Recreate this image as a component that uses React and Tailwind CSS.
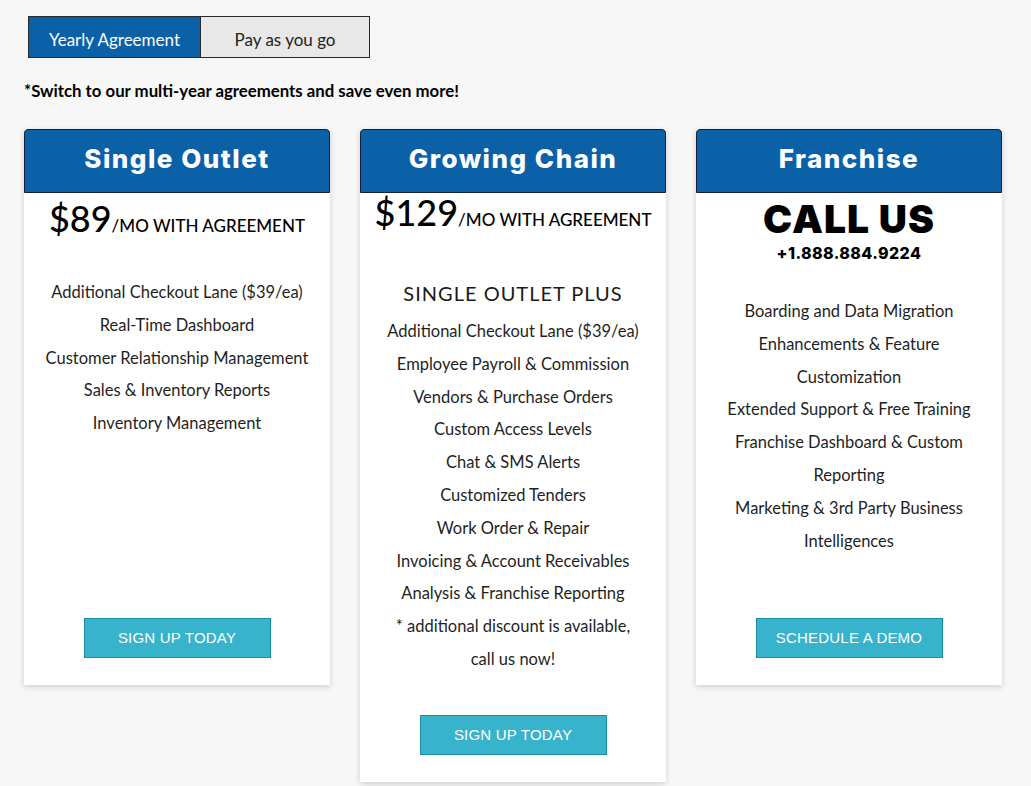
import React from "react";

const lato = { fontFamily: "Lato, 'Open Sans', sans-serif" };
const heading = { fontFamily: "Inter, 'Open Sans', sans-serif" };
const arial = { fontFamily: "'Liberation Sans', Arial, sans-serif" };

function Header({ title }) {
  return (
    <div className="h-[64px] rounded-t-[4px] border-[1.5px] border-[#18222e] bg-[#0b61a8] flex items-center justify-center pb-[4px]">
      <span
        style={heading}
        className="text-white text-[26px] font-extrabold tracking-[1.5px] leading-none"
      >
        {title}
      </span>
    </div>
  );
}

function Features({ items }) {
  return (
    <ul style={lato} className="text-center text-[16.5px] leading-[32.8px] text-[#1f1f1f]">
      {items.map((t, i) => (
        <li key={i}>{t}</li>
      ))}
    </ul>
  );
}

function Button({ children }) {
  return (
    <button
      style={arial}
      className="w-[187px] h-[40px] bg-[#38b3cc] border border-[#1a8f9f] text-white text-[15px] uppercase tracking-[0.2px] flex items-center justify-center"
    >
      {children}
    </button>
  );
}

function Price({ amount }) {
  return (
    <div style={lato} className="flex items-baseline justify-center text-black">
      <span className="text-[36px] leading-none font-medium">{amount}</span>
      <span className="text-[17px] leading-none font-medium">/MO WITH AGREEMENT</span>
    </div>
  );
}

export default function App() {
  return (
    <div className="min-h-[786px] w-full bg-[#f7f7f7] pt-[16px] pl-[24px]" style={lato}>
      <div className="ml-[4px] flex w-[342px] h-[42px] border border-[#2a2a2a]">
        <div className="w-[171px] bg-[#0b61a8] text-white text-[17px] flex items-center justify-center pt-[5px]">
          Yearly Agreement
        </div>
        <div className="flex-1 bg-[#e9e8e9] border-l border-[#2a2a2a] text-[#222] text-[17px] flex items-center justify-center pt-[5px]">
          Pay as you go
        </div>
      </div>

      <p className="mt-[22px] text-[16.8px] font-bold text-black leading-[22px]">
        *Switch to our multi-year agreements and save even more!
      </p>

      <div className="mt-[27px] flex items-start gap-[30px]">
        {/* Card 1 */}
        <div className="w-[306px] h-[556px] flex flex-col bg-white shadow-[0_2px_6px_rgba(0,0,0,0.16)]">
          <Header title="Single Outlet" />
          <div className="flex-1 flex flex-col items-center pb-[27px]">
            <div className="h-[52px] flex items-center justify-center pb-[2px]">
              <Price amount="$89" />
            </div>
            <div className="mt-[31px]">
              <Features
                items={[
                  "Additional Checkout Lane ($39/ea)",
                  "Real-Time Dashboard",
                  "Customer Relationship Management",
                  "Sales & Inventory Reports",
                  "Inventory Management",
                ]}
              />
            </div>
            <div className="mt-auto">
              <Button>Sign up today</Button>
            </div>
          </div>
        </div>

        {/* Card 2 */}
        <div className="w-[306px] flex flex-col bg-white shadow-[0_2px_6px_rgba(0,0,0,0.16)]">
          <Header title="Growing Chain" />
          <div className="flex flex-col items-center pb-[27px]">
            <div className="h-[38px] flex items-center justify-center">
              <Price amount="$129" />
            </div>
            <div className="mt-[47px] h-[30px] flex items-center text-[20px] tracking-[1px] text-[#1a1a1a]">
              SINGLE OUTLET PLUS
            </div>
            <div className="mt-[7px]">
              <Features
                items={[
                  "Additional Checkout Lane ($39/ea)",
                  "Employee Payroll & Commission",
                  "Vendors & Purchase Orders",
                  "Custom Access Levels",
                  "Chat & SMS Alerts",
                  "Customized Tenders",
                  "Work Order & Repair",
                  "Invoicing & Account Receivables",
                  "Analysis & Franchise Reporting",
                  "* additional discount is available,",
                  "call us now!",
                ]}
              />
            </div>
            <div className="mt-[39px]">
              <Button>Sign up today</Button>
            </div>
          </div>
        </div>

        {/* Card 3 */}
        <div className="w-[306px] h-[556px] flex flex-col bg-white shadow-[0_2px_6px_rgba(0,0,0,0.16)]">
          <Header title="Franchise" />
          <div className="flex-1 flex flex-col items-center pb-[27px]">
            <div
              style={heading}
              className="mt-[3px] h-[44px] flex items-center text-[39px] font-black tracking-[1px] text-black leading-none"
            >
              CALL US
            </div>
            <div
              style={heading}
              className="mt-[2px] h-[22px] flex items-center text-[16px] font-extrabold tracking-[0.4px] text-black leading-none"
            >
              +1.888.884.9224
            </div>
            <div className="mt-[31px]">
              <Features
                items={[
                  "Boarding and Data Migration",
                  "Enhancements & Feature",
                  "Customization",
                  "Extended Support & Free Training",
                  "Franchise Dashboard & Custom",
                  "Reporting",
                  "Marketing & 3rd Party Business",
                  "Intelligences",
                ]}
              />
            </div>
            <div className="mt-auto">
              <Button>Schedule a demo</Button>
            </div>
          </div>
        </div>
      </div>
    </div>
  );
}
